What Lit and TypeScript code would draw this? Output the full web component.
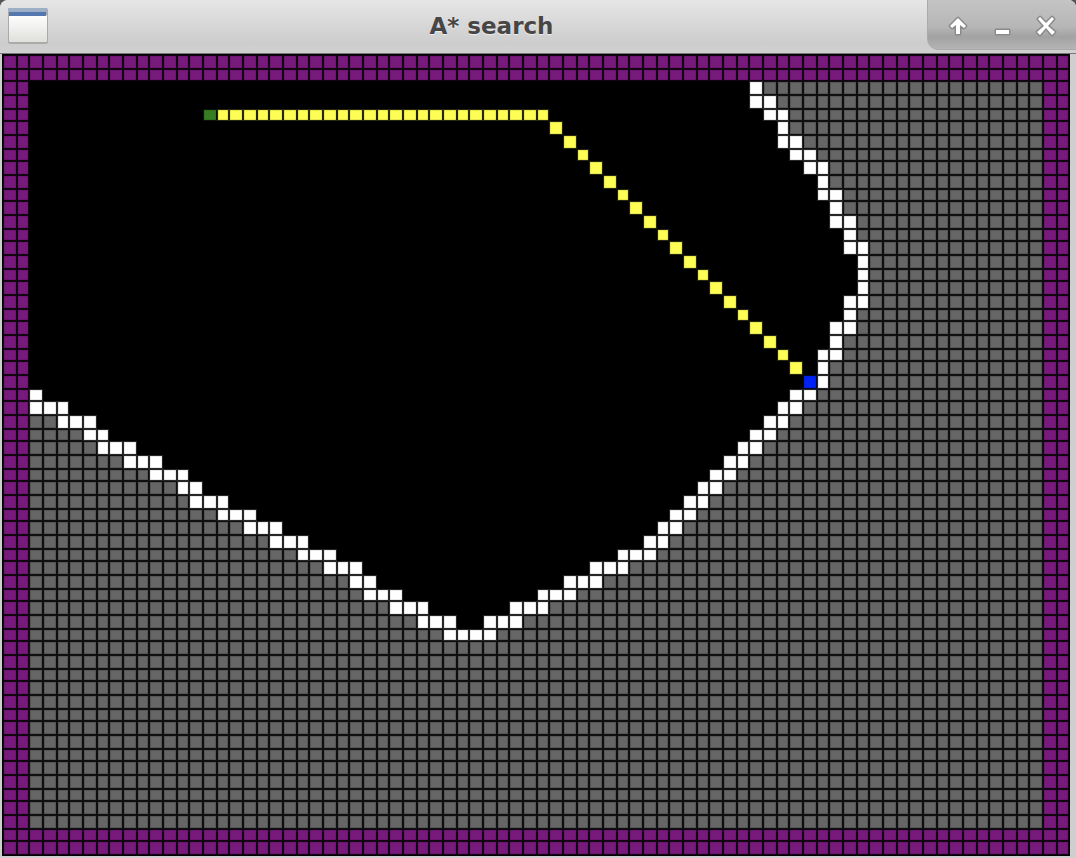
import { LitElement, html, css, svg } from "lit";
import { customElement } from "lit/decorators.js";

type Kind = "border" | "unknown" | "wall" | "path" | "start" | "goal";

const COLS = 80;
const ROWS = 60;
const WIDTH = 1068;
const HEIGHT = 802;

// Three cells span 40 units, so the grid lines fall on whole units.
const line = (i: number) => 40 * Math.floor(i / 3) + [0, 14, 26][i % 3] + 1;

// Wall spans as [row, first column, last column].
const WALLS: [number, number, number][] = [
  [2, 56, 56], [3, 56, 57], [4, 57, 58], [5, 58, 58], [6, 58, 59],
  [7, 59, 60], [8, 60, 61], [9, 61, 61], [10, 61, 62], [11, 62, 62],
  [12, 62, 63], [13, 63, 63], [14, 63, 64], [15, 64, 64], [16, 64, 64],
  [17, 64, 64], [18, 63, 64], [19, 63, 63], [20, 62, 63], [21, 62, 62],
  [22, 61, 62], [23, 61, 61], [24, 61, 61],
  [25, 2, 2], [25, 59, 60],
  [26, 2, 4], [26, 58, 59],
  [27, 4, 6], [27, 57, 58],
  [28, 6, 7], [28, 56, 57],
  [29, 7, 9], [29, 55, 56],
  [30, 9, 11], [30, 54, 55],
  [31, 11, 13], [31, 53, 54],
  [32, 13, 14], [32, 52, 53],
  [33, 14, 16], [33, 51, 52],
  [34, 16, 18], [34, 50, 51],
  [35, 18, 20], [35, 49, 50],
  [36, 20, 22], [36, 48, 49],
  [37, 22, 24], [37, 46, 48],
  [38, 24, 26], [38, 44, 46],
  [39, 26, 27], [39, 42, 44],
  [40, 27, 29], [40, 40, 42],
  [41, 29, 31], [41, 38, 40],
  [42, 31, 33], [42, 36, 38],
  [43, 33, 36],
];

function buildGrid(): (Kind | null)[][] {
  const grid: (Kind | null)[][] = Array.from({ length: ROWS }, () =>
    Array<Kind | null>(COLS).fill(null),
  );
  for (const [row, from, to] of WALLS) {
    for (let col = from; col <= to; col++) grid[row][col] = "wall";
  }
  for (let row = 0; row < ROWS; row++) {
    const walls = WALLS.filter((w) => w[0] === row);
    const left = walls.find((w) => w[1] < 34);
    const right = walls.find((w) => w[2] > 34);
    for (let col = 0; col < COLS; col++) {
      const isBorder = row < 2 || row >= ROWS - 2 || col < 2 || col >= COLS - 2;
      if (isBorder) grid[row][col] = "border";
      else if (
        row > 43 ||
        (left && col < left[1]) ||
        (right && col > right[2])
      )
        grid[row][col] = "unknown";
    }
  }
  grid[4][15] = "start";
  for (let col = 16; col <= 40; col++) grid[4][col] = "path";
  for (let row = 5; row <= 23; row++) grid[row][row + 36] = "path";
  grid[24][60] = "goal";
  return grid;
}

const GRID = buildGrid();
const KINDS: Kind[] = ["unknown", "border", "path", "start", "goal", "wall"];

function outline(kind: Kind, inset: number): string {
  let d = "";
  GRID.forEach((cells, row) =>
    cells.forEach((cell, col) => {
      if (cell !== kind) return;
      const x = line(col) + inset;
      const y = line(row) + inset;
      const w = line(col + 1) - line(col) - 2 * inset;
      const h = line(row + 1) - line(row) - 2 * inset;
      d += `M${x} ${y}h${w}v${h}h${-w}z`;
    }),
  );
  return d;
}

@customElement("search-board")
export class SearchBoard extends LitElement {
  static styles = css`
    :host { display: block; background: #000; }
    svg { display: block; width: 100%; height: auto; }
    .gap { opacity: 0.15; }
    .edge { opacity: 0.8; }
    .unknown { fill: #666; }
    .border { fill: #78197c; }
    .path { fill: #fffe54; }
    .start { fill: #377e22; }
    .goal { fill: #0023f5; }
    .wall { fill: #fff; }
  `;

  render() {
    return html`
      <svg viewBox="0 0 ${WIDTH} ${HEIGHT}" role="img" aria-label="Search grid">
        ${KINDS.map(
          (kind) => svg`
            <g class=${kind}>
              <path class="gap" d=${outline(kind, 0)} />
              <path class="edge" d=${outline(kind, 1)} />
              <path d=${outline(kind, kind === "unknown" ? 2 : 1.5)} />
            </g>`,
        )}
      </svg>
    `;
  }
}

@customElement("app-root")
export class AppRoot extends LitElement {
  static styles = css`
    :host { display: block; background: #555; }
    * { box-sizing: border-box; }
    .window {
      background: #cfcfcf;
      border-radius: 8px 8px 0 0;
      overflow: hidden;
    }
    .titlebar {
      display: flex;
      align-items: flex-start;
      height: 54px;
      background: linear-gradient(#e6e6e6, #cdcdcd 80%, #d0d0d0);
      border-bottom: 1px solid #777;
    }
    button {
      padding: 0;
      border: 0;
      background: none;
    }
    .menu {
      width: 40px;
      height: 38px;
      margin: 7px 8px;
    }
    .menu svg { display: block; }
    h1 {
      flex: 1;
      margin: 0;
      text-align: center;
      font: bold 23px/52px "DejaVu Sans", sans-serif;
      color: #464646;
      text-shadow: 0 1px 1px #eee;
    }
    .controls {
      display: flex;
      height: 50px;
      padding: 0 8px;
      background: linear-gradient(#c4c4c4, #b6b6b6 55%, #a2a2a2 75%, #b4b4b4);
      border: solid #aaa;
      border-width: 0 0 1px 1px;
      border-radius: 0 0 0 12px;
    }
    .controls button {
      width: 44px;
      height: 50px;
    }
    .controls svg { display: block; width: 44px; height: 50px; }
    .halo { fill: #8b8b8b; stroke: #8b8b8b; stroke-width: 3; stroke-linejoin: round; }
    .mark { fill: #fff; }
    .client { padding: 0 6px 2px 2px; }
  `;

  private control(label: string, d: string) {
    return html`<button aria-label=${label}>
      <svg viewBox="0 0 44 50">
        <path class="halo" d=${d} />
        <path class="mark" d=${d} />
      </svg>
    </button>`;
  }

  render() {
    return html`
      <main class="window">
        <header class="titlebar">
          <button class="menu" aria-label="Window menu">
            <svg width="40" height="38" viewBox="0 0 40 38">
              <defs>
                <linearGradient id="paper" x2="0" y2="1">
                  <stop offset="0" stop-color="#fff" />
                  <stop offset="1" stop-color="#dfdfdb" />
                </linearGradient>
              </defs>
              <rect x="0" y="1" width="40" height="36" rx="2" fill="#aaa" />
              <rect x="1" y="8" width="38" height="27" rx="1" fill="url(#paper)" />
              <rect x="0" y="1" width="39" height="4" rx="1" fill="#9cafc6" />
              <rect x="1" y="5" width="37" height="4" fill="#5577b0" />
            </svg>
          </button>
          <h1>A* search</h1>
          <div class="controls">
            ${this.control("Maximize", "M22 18L30 26L28 28L24 25V34H20V25L16 28L14 26Z")}
            ${this.control("Minimize", "M16 30H29V34H16Z")}
            ${this.control("Close", "M16 17L22 23L28 17L30 19L24 26L31 32L28 35L22 28L16 35L13 32L20 26L14 19Z")}
          </div>
        </header>
        <div class="client"><search-board></search-board></div>
      </main>
    `;
  }
}
